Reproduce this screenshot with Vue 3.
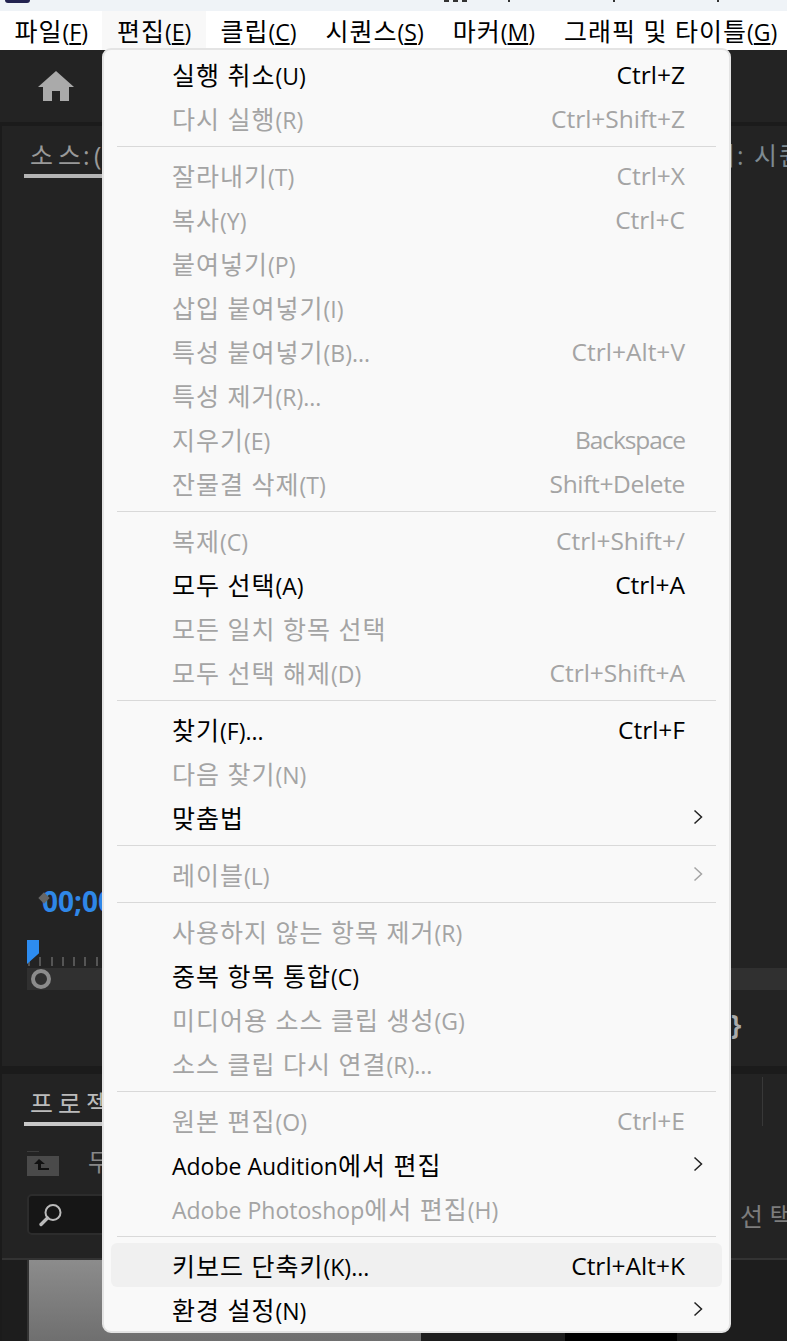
<script setup>
const runs = (text) =>
  text.split(/([가-힣 ]+)/).filter(Boolean).map((t) => ({ t, h: /[가-힣]/.test(t) }))

const tabs = [
  { k: '파일', h: 'F' },
  { k: '편집', h: 'E', on: true },
  { k: '클립', h: 'C' },
  { k: '시퀀스', h: 'S' },
  { k: '마커', h: 'M' },
  { k: '그래픽 및 타이틀', h: 'G' },
]
const groups = [
  [
    { t: '실행 취소(U)', s: 'Ctrl+Z', on: true },
    { t: '다시 실행(R)', s: 'Ctrl+Shift+Z' },
  ],
  [
    { t: '잘라내기(T)', s: 'Ctrl+X' },
    { t: '복사(Y)', s: 'Ctrl+C' },
    { t: '붙여넣기(P)' },
    { t: '삽입 붙여넣기(I)' },
    { t: '특성 붙여넣기(B)...', s: 'Ctrl+Alt+V' },
    { t: '특성 제거(R)...' },
    { t: '지우기(E)', s: 'Backspace', tight: 'x' },
    { t: '잔물결 삭제(T)', s: 'Shift+Delete', tight: 'm' },
  ],
  [
    { t: '복제(C)', s: 'Ctrl+Shift+/' },
    { t: '모두 선택(A)', s: 'Ctrl+A', on: true },
    { t: '모든 일치 항목 선택' },
    { t: '모두 선택 해제(D)', s: 'Ctrl+Shift+A' },
  ],
  [
    { t: '찾기(F)...', s: 'Ctrl+F', on: true },
    { t: '다음 찾기(N)' },
    { t: '맞춤법', on: true, sub: true },
  ],
  [{ t: '레이블(L)', sub: true }],
  [
    { t: '사용하지 않는 항목 제거(R)' },
    { t: '중복 항목 통합(C)', on: true },
    { t: '미디어용 소스 클립 생성(G)' },
    { t: '소스 클립 다시 연결(R)...' },
  ],
  [
    { t: '원본 편집(O)', s: 'Ctrl+E' },
    { t: 'Adobe Audition에서 편집', on: true, sub: true },
    { t: 'Adobe Photoshop에서 편집(H)' },
  ],
  [
    { t: '키보드 단축키(K)...', s: 'Ctrl+Alt+K', on: true, hover: true },
    { t: '환경 설정(N)', on: true, sub: true },
  ],
]
const ticks = Array.from({ length: 10 })
const specks = [
  { l: 444, w: 5 }, { l: 453, w: 5 }, { l: 462, w: 5 }, { l: 508, w: 2 }, { l: 613, w: 2 }, { l: 717, w: 2 },
]
</script>

<template>
  <div class="app">
    <div class="titlebar">
      <span class="applogo"></span>
      <i v-for="s in specks" :key="s.l" class="speck" :style="{ left: s.l + 'px', width: s.w + 'px' }"></i>
    </div>
    <nav class="menubar">
      <div v-for="t in tabs" :key="t.h" class="tab" :class="{ active: t.on }">
        <span><span class="hg">{{ t.k }}</span>(<u>{{ t.h }}</u>)</span>
      </div>
    </nav>
    <div class="workspace">
      <svg class="home" viewBox="0 0 36 30" width="36" height="30">
        <path d="M18 0 L36 16 L31 16 L31 30 L22 30 L22 20 L14 20 L14 30 L5 30 L5 16 L0 16 Z" fill="#aaa" />
      </svg>
    </div>
    <section class="panel source">
      <div class="panel-tabs">
        <span class="tabname"><span class="wide pull">소스</span><span class="tail">: (</span></span>
        <span class="tabright">터: 시퀀</span>
      </div>
      <div class="spacer"></div>
      <div class="timecode"><i class="diamond"></i>00;00</div>
      <div class="ruler">
        <span class="playhead"></span>
        <i v-for="(x, i) in ticks" :key="i" class="tick"></i>
      </div>
      <div class="scroll"><span class="knob"></span></div>
      <div class="controls"><span class="brace">}</span></div>
    </section>
    <section class="panel project">
      <div class="panel-tabs">
        <span class="tabname strong"><span class="wide">프로젝트</span></span>
        <i class="vline"></i>
      </div>
      <div class="proj-row">
        <svg class="up" viewBox="0 0 32 26" width="32" height="26">
          <path d="M0 1h12v1H0z" fill="#3c3c3c" />
          <path d="M0 6h32v20H0z" fill="#4a4a4a" />
          <path d="M12 9l6 5h-4v4h8v2H11v-6H7z" fill="#111" />
        </svg>
        <span class="proj-name">무제</span>
      </div>
      <div class="search-row">
        <div class="search">
          <svg viewBox="0 0 24 24" width="24" height="24">
            <circle cx="15" cy="9.5" r="7.5" fill="none" stroke="#bbb" stroke-width="2" />
            <path d="M9.5 15 L3 21.5" stroke="#bbb" stroke-width="3.4" stroke-linecap="round" />
          </svg>
        </div>
        <span class="sel">선 택</span>
      </div>
      <div class="thumbs">
        <div class="thumb"></div>
        <div class="thumb-gap"></div>
        <div class="thumb-black"></div>
      </div>
    </section>

    <div class="menu">
      <template v-for="(g, gi) in groups" :key="gi">
        <hr v-if="gi" class="sep" />
        <div v-for="r in g" :key="r.t" class="row" :class="{ on: r.on, hover: r.hover }">
          <span class="label"><span v-for="(p, i) in runs(r.t)" :key="i" :class="{ hg: p.h }">{{ p.t }}</span></span>
          <span v-if="r.s" class="short" :class="r.tight && 'tight-' + r.tight">{{ r.s }}</span>
          <svg v-if="r.sub" class="chev" viewBox="0 0 10 16" width="10" height="16">
            <path d="M1.5 1.5 L8.5 8 L1.5 14.5" fill="none" stroke="currentColor" stroke-width="1.5" />
          </svg>
        </div>
      </template>
    </div>
  </div>
</template>

<style>
html, body { margin: 0; background: #232323; }
</style>

<style scoped>
.app {
  position: relative;
  width: 787px;
  height: 1341px;
  overflow: hidden;
  background: #1b1b1b;
  font-family: "Open Sans", "Noto Sans CJK KR", sans-serif;
}
.titlebar { height: 11px; background: #eff3f7; overflow: hidden; position: relative; }
.applogo { display: block; width: 25px; height: 3px; margin-left: 5px; background: #232350; border-radius: 0 0 4px 4px; }
.speck { position: absolute; top: 0; height: 2px; background: #333; }
.menubar { height: 39px; background: #fff; display: flex; }
.tab {
  display: flex;
  align-items: center;
  padding: 0 14.5px 2px;
  white-space: nowrap;
  font-size: 23px;
  color: #000;
}
.tab.active { background: #f8f8f8; }
.tab u { text-underline-offset: 2px; }
.hg { font-size: 25px; letter-spacing: 1px; }
.workspace { height: 72px; background: #232323; display: flex; align-items: center; padding-left: 38px; margin-bottom: 4px; }
.home { display: block; }
.panel { background: #232323; margin-left: 2px; display: flex; flex-direction: column; }
.source { height: 940px; margin-bottom: 8px; }
.project { height: 267px; }
.panel-tabs { height: 52px; flex: none; display: flex; justify-content: space-between; padding-left: 22px; position: relative; }
.tabname {
  font-size: 25px;
  color: #999;
  height: 48px;
  line-height: 58px;
  border-bottom: 4px solid #b4b4b4;
  padding-left: 6px;
  white-space: nowrap;
  width: 73px;
}
.wide { letter-spacing: 5px; }
.pull { margin-right: -3px; }
.tail { word-spacing: -2px; }
.tabname.strong { color: #bbb; border-bottom-color: #c8c8c8; width: 120px; }
.tabright { font-size: 25px; color: #7d8a92; white-space: nowrap; position: absolute; left: 710px; top: 10px; letter-spacing: 2px; }
.spacer { height: 700px; flex: none; }
.timecode { color: #2f87e8; font-size: 28px; font-weight: 700; padding-left: 40px; height: 62px; flex: none; line-height: 46px; position: relative; white-space: nowrap; }
.diamond { position: absolute; left: 38px; top: 16px; width: 8px; height: 8px; background: #666; transform: rotate(45deg); }
.ruler { height: 28px; flex: none; padding-left: 26px; display: flex; gap: 9.3px; align-items: flex-end; position: relative; box-sizing: border-box; padding-bottom: 2px; }
.tick { width: 2px; height: 9px; background: #555; }
.playhead { position: absolute; left: 25px; top: 0; width: 12px; height: 24px; background: #2d8cf0; clip-path: polygon(0 0, 100% 0, 100% 55%, 0 100%); }
.scroll { height: 22px; flex: none; background: #303030; position: relative; margin-left: 25px; }
.knob { position: absolute; left: 4px; top: 1px; width: 12px; height: 12px; border: 4px solid #8c8c8c; border-radius: 50%; }
.controls { position: relative; flex: 1; }
.brace { position: absolute; left: 729px; top: 16px; color: #aaa; font-size: 26px; font-weight: 700; }
.vline { position: absolute; left: 760px; top: 3px; width: 1px; height: 49px; background: #383838; }
.proj-row { height: 26px; flex: none; margin-top: 24px; padding-left: 25px; display: flex; align-items: center; gap: 29px; }
.proj-name { color: #888; font-size: 24px; margin-top: -6px; white-space: nowrap; }
.search-row { display: flex; align-items: center; height: 41px; flex: none; margin-top: 18px; padding-left: 25px; position: relative; }
.search { width: 560px; height: 41px; background: #161616; border: 2px solid #2c2c2c; border-radius: 5px; display: flex; align-items: center; padding-left: 9px; box-sizing: border-box; }
.sel { position: absolute; left: 738px; color: #7d7d7d; font-size: 25px; white-space: nowrap; }
.thumbs { flex: 1; position: relative; margin-top: 23px; padding-left: 25px; border-top: 2px solid #333; display: flex; background: #1d1d1d; }
.thumb { width: 392px; background: linear-gradient(#8c8c8c, #6f6f6f); border-left: 2px solid #333; }
.thumb-gap { width: 144px; }
.thumb-black { width: 112px; background: #000; }

.menu {
  position: absolute;
  left: 102px;
  top: 48px;
  width: 629px;
  height: 1285px;
  box-sizing: border-box;
  padding: 2px 7px 0;
  background: #f9f9f9;
  border: 2px solid #e4e4e4;
  border-radius: 9px;
}
.row {
  height: 44px;
  display: flex;
  align-items: center;
  padding-left: 61px;
  padding-right: 37px;
  position: relative;
  font-size: 23px;
  color: #a4a4a4;
  white-space: nowrap;
  border-radius: 6px;
}
.row.on { color: #000; }
.row.hover { background: #f0f0f0; }
.label { flex: 1; }
.short { font-size: 24.5px; }
.tight-x { letter-spacing: -1.1px; }
.tight-m { letter-spacing: -0.35px; }
.chev { position: absolute; right: 19px; top: 14px; color: #222; }
.row:not(.on) .chev { color: #a4a4a4; }
.sep { margin: 6px; border: 0; height: 1px; background: #d9d9d9; }
</style>
